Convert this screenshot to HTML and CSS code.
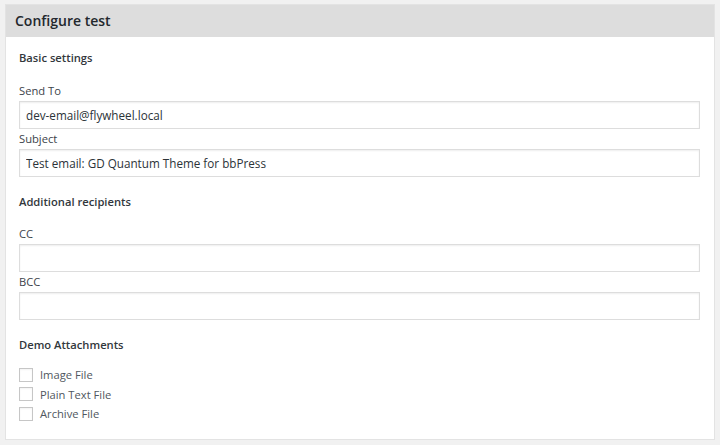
FILE: index.html
```html
<!DOCTYPE html>
<html>
<head>
<meta charset="utf-8">
<link rel="stylesheet" href="styles.css">
</head>
<body>
<div class="panel">
  <div class="panel-header">Configure test</div>
  <div class="panel-body">
    <div class="section-title first">Basic settings</div>
    <label class="field-label">Send To</label>
    <input class="field" type="text" value="dev-email@flywheel.local">
    <label class="field-label">Subject</label>
    <input class="field" type="text" value="Test email: GD Quantum Theme for bbPress">

    <div class="section-title">Additional recipients</div>
    <label class="field-label">CC</label>
    <input class="field" type="text" value="">
    <label class="field-label">BCC</label>
    <input class="field" type="text" value="">

    <div class="section-title">Demo Attachments</div>
    <div class="checks">
      <label class="check"><span class="box"></span>Image File</label>
      <label class="check"><span class="box"></span>Plain Text File</label>
      <label class="check"><span class="box"></span>Archive File</label>
    </div>
  </div>
</div>
</body>
</html>
```
FILE: styles.css
```css
html, body {
  margin: 0;
  padding: 0;
}
body {
  background: #f1f1f1;
  padding: 4px 5px 0 5px;
  font-family: "Open Sans", "Noto Sans", sans-serif;
  color: #444;
}
.panel {
  background: #fff;
  border: 1px solid #e3e3e3;
  box-sizing: border-box;
  height: 436px;
}
.panel-header {
  background: #dddddd;
  height: 32px;
  line-height: 32px;
  padding-left: 9px;
  font-size: 14px;
  font-weight: 600;
  color: #23282d;
}
.panel-body {
  padding: 11px 14px 0 13px;
  display: flex;
  flex-direction: column;
}
.section-title {
  font-size: 11.2px;
  font-weight: 600;
  line-height: 20px;
  color: #32373c;
  margin: 15px 0 12px;
}
.section-title.first {
  margin-top: 0;
  margin-bottom: 13px;
}
.field-label {
  font-size: 11.2px;
  line-height: 20px;
  height: 20px;
  color: #3c434a;
}
.field {
  box-sizing: border-box;
  height: 28px;
  width: 100%;
  margin: 0;
  border: 1px solid #dddddd;
  box-shadow: inset 0 1px 2px rgba(0,0,0,0.07);
  padding: 0 6px;
  font-family: inherit;
  font-size: 11.7px;
  color: #2c3338;
  background: #fff;
  outline: none;
}
.checks {
  display: flex;
  flex-direction: column;
  margin-top: -2px;
}
.check {
  display: flex;
  align-items: center;
  height: 19.5px;
  font-size: 11.2px;
  color: #50575e;
}
.box {
  width: 14px;
  height: 14px;
  box-sizing: border-box;
  border: 1px solid #c6c6c6;
  box-shadow: inset 0 1px 2px rgba(0,0,0,0.05);
  margin-right: 7px;
  background: #fff;
}
```
